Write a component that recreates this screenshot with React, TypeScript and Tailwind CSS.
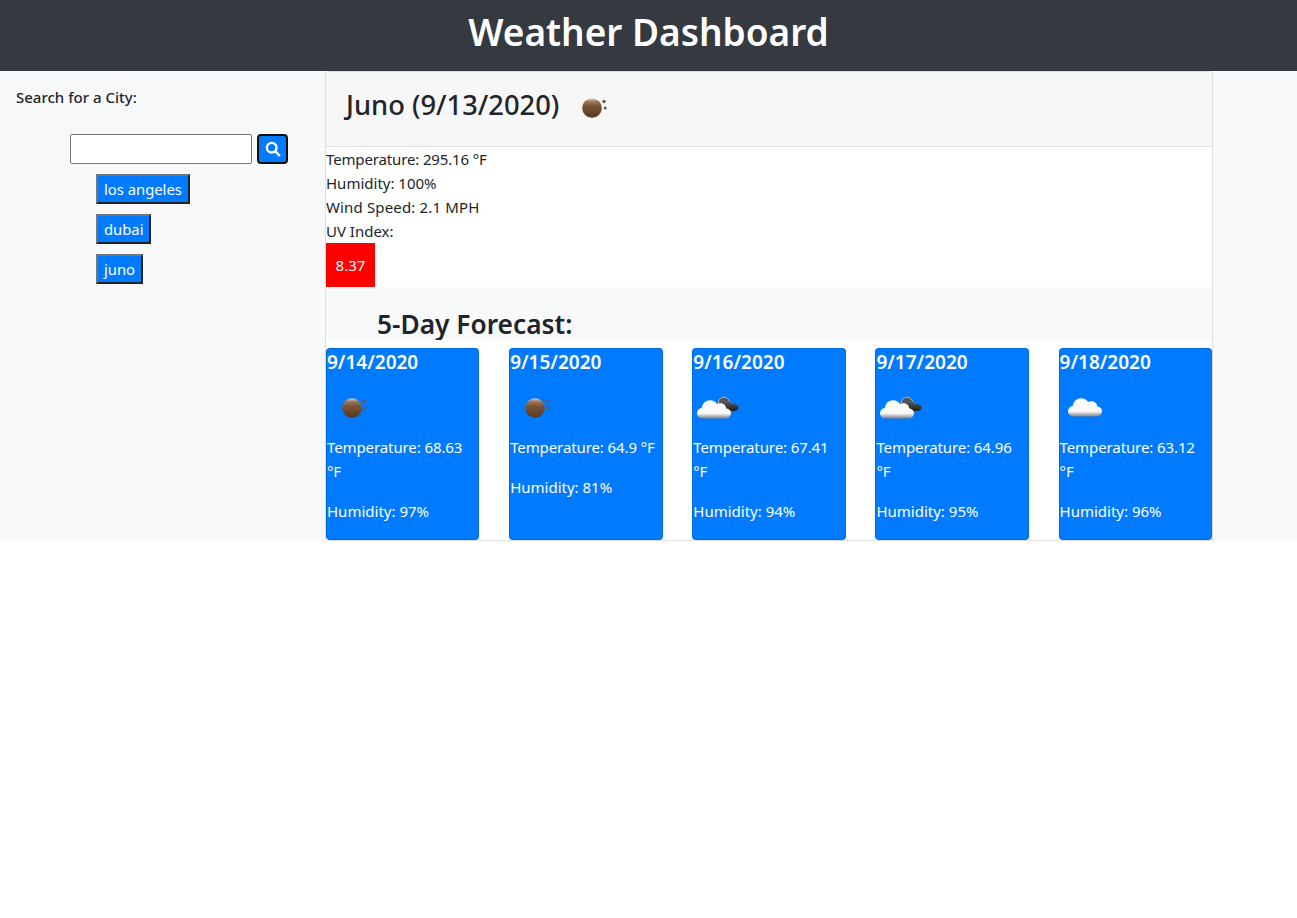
import React from "react";

function Moon() {
  return (
    <svg width="50" height="50" viewBox="0 0 50 50" className="block">
      <defs>
        <linearGradient id="moonFill" x1="0" y1="0" x2="0" y2="1">
          <stop offset="0" stopColor="#e4d8cc" />
          <stop offset="0.16" stopColor="#a07a5c" />
          <stop offset="0.4" stopColor="#7a5436" />
          <stop offset="1" stopColor="#573823" />
        </linearGradient>
      </defs>
      <circle cx="24" cy="26" r="9.8" fill="url(#moonFill)" />
      <circle cx="36" cy="19.5" r="1.8" fill="#645a58" />
      <circle cx="37.200" cy="26" r="1.500" fill="#645a58" />
    </svg>
  );
}

function Cloud({ dark }: { dark: boolean }) {
  return (
    <svg width="50" height="50" viewBox="0 0 50 50" className="block">
      <defs>
        <linearGradient id="cloudW" x1="0" y1="0" x2="0" y2="1">
          <stop offset="0" stopColor="#ffffff" />
          <stop offset="0.72" stopColor="#f8f8f8" />
          <stop offset="1" stopColor="#808080" />
        </linearGradient>
        <linearGradient id="cloudD" x1="0" y1="0" x2="0" y2="1">
          <stop offset="0" stopColor="#5c5c5c" />
          <stop offset="1" stopColor="#1e1e1e" />
        </linearGradient>
      </defs>
      {dark && (
        <>
          <circle cx="31" cy="21" r="5.800" fill="#555" stroke="#b5b5b5" strokeWidth="1" />
          <path d="M29 29c-2.500 0-4-1.600-4-3.500s1.500-3.500 3.500-3.500c.8-1.900 2.800-3 5-3 2.400 0 4.300 1.200 5 3.200 .5-.1 1-.2 1.500-.1 2.700 0 5.500 1.500 5.500 3.500S44 29 41 29z" fill="url(#cloudD)" />
        </>
      )}
      <g transform={dark ? undefined : "translate(4 -2)"}>
        <path d="M9.500 36.500c-3.200 0-5.500-2.300-5.500-5.200 0-2.800 2-4.800 4.700-5.200C9.500 21 13 18.200 17 18.200c3 0 5.600 1.400 7.100 3.900 1-.6 2.200-.9 3.400-.9 3.300 0 5.400 2.300 5.900 5.300 2.800.2 4.600 2 4.600 4.500 0 2.600-2.100 5.500-5 5.500z" fill="url(#cloudW)" />
      </g>
    </svg>
  );
}

const days = [
  { date: "9/14/2020", icon: "moon", temp: "68.63", hum: "97" },
  { date: "9/15/2020", icon: "moon", temp: "64.9", hum: "81" },
  { date: "9/16/2020", icon: "dark", temp: "67.41", hum: "94" },
  { date: "9/17/2020", icon: "dark", temp: "64.96", hum: "95" },
  { date: "9/18/2020", icon: "cloud", temp: "63.12", hum: "96" },
];

function CityBtn({ name }: { name: string }) {
  return (
    <button className="block h-[30px] px-[6px] text-[14.8px] leading-[22px] text-white bg-[#007bff] border-2 border-t-[#767676] border-l-[#767676] border-r-[#222222] border-b-[#222222]">
      {name}
    </button>
  );
}

export default function App() {
  return (
    <div className="bg-white min-h-[918px] text-[#212529] font-['Noto_Sans',sans-serif] text-[15px] leading-6">
      <header className="h-[71px] bg-[#343a40] flex items-center justify-center">
        <h1 className="text-[37px] font-semibold text-white leading-[48px] mb-[8px]">Weather Dashboard</h1>
      </header>
      <div className="flex bg-[#f8f9fa] h-[470px]">
        <aside className="w-[325px] shrink-0">
          <p className="ml-4 mt-[14px] font-medium text-[15px] leading-6">Search for a City:</p>
          <div className="flex gap-[5px] ml-[70px] mt-[25px]">
            <input aria-label="City" className="w-[182px] h-[30px] bg-white border border-[#767676] rounded-[2px]" />
            <button className="w-[31px] h-[30px] bg-[#007bff] border-2 border-[#111] rounded-[4px] flex items-center justify-center">
              <svg width="16" height="16" viewBox="0 0 16 16" fill="none" stroke="white" strokeWidth="2.400" strokeLinecap="round">
                <circle cx="6.700" cy="6.700" r="4.800" />
                <path d="M10.300 10.300 14.300 14.300" />
              </svg>
            </button>
          </div>
          <div className="ml-[96px] mt-[10px] flex flex-col items-start gap-[10px]">
            <CityBtn name="los angeles" />
            <CityBtn name="dubai" />
            <CityBtn name="juno" />
          </div>
        </aside>
        <main className="w-[888px] border border-[rgba(0,0,0,0.125)] rounded-[4px] flex flex-col bg-white">
          <div className="h-[75px] shrink-0 bg-[#f7f7f7] border-b border-[#dfdfdf] flex items-center pl-5">
            <h2 className="text-[27.300px] font-medium leading-8 mb-[8px]">Juno (9/13/2020)</h2>
            <div className="ml-[9px] mb-[4px]"><Moon /></div>
          </div>
          <div className="h-[140px] shrink-0 bg-white">
            <p className="tracking-[-0.14px]">Temperature: 295.16 °F</p>
            <p>Humidity: 100%</p>
            <p className="tracking-[0.15px]">Wind Speed: 2.1 MPH</p>
            <p>UV Index:</p>
            <div className="w-[49px] h-[44px] bg-[#ff0000] text-white text-[15px] flex items-center justify-center">8.37</div>
          </div>
          <div className="h-[53px] shrink-0 bg-[#f8f9fa] pl-[51px] pt-[18px]">
            <h3 className="text-[26.300px] font-semibold leading-[38px]">5-Day Forecast:</h3>
          </div>
          <div className="flex-1 bg-white pt-2 flex justify-between">
            {days.map((d) => (
              <div key={d.date} className="w-[153.400px] h-[192px] bg-[#007bff] border border-[rgba(0,0,0,0.125)] rounded-[4px] text-white">
                <h5 className="text-[19px] font-semibold leading-6 mt-px">{d.date}</h5>
                <div className="mt-[8px] h-[50px]">
                  {d.icon === "moon" ? <div className="ml-px"><Moon /></div> : <Cloud dark={d.icon === "dark"} />}
                </div>
                <p className="mt-[3px] tracking-[-0.1px]">Temperature: {d.temp} °F</p>
                <p className="mt-4">Humidity: {d.hum}%</p>
              </div>
            ))}
          </div>
        </main>
      </div>
    </div>
  );
}
